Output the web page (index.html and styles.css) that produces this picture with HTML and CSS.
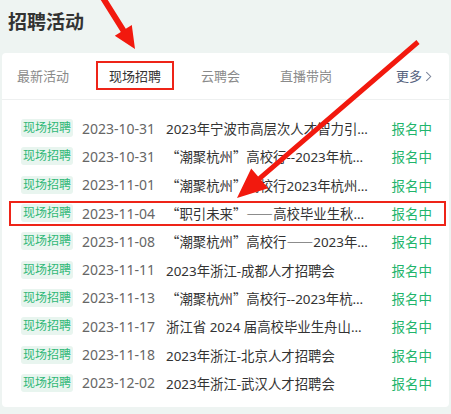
FILE: index.html
```html
<!DOCTYPE html>
<html lang="zh-CN">
<head>
<meta charset="utf-8">
<title>招聘活动</title>
<link rel="stylesheet" href="styles.css">
</head>
<body>
<div class="page">
  <header class="head"><h1 class="head-title">招聘活动</h1></header>
  <section class="card">
    <nav class="tabs">
      <div class="tab-group">
        <span class="tab">最新活动</span>
        <span class="tab tab-active">现场招聘</span>
        <span class="tab">云聘会</span>
        <span class="tab">直播带岗</span>
      </div>
      <span class="more">更多<svg class="more-icon" viewBox="0 0 8 12" width="7" height="11"><path d="M1.5 1 L6.5 6 L1.5 11" fill="none" stroke="#7a8499" stroke-width="1.2"/></svg></span>
    </nav>
    <ul class="list">
      <li class="row"><span class="tag">现场招聘</span><span class="date">2023-10-31</span><span class="title">2023年宁波市高层次人才智力引进活动</span><span class="status">报名中</span></li>
      <li class="row"><span class="tag">现场招聘</span><span class="date">2023-10-31</span><span class="title"><span class="qt">“</span>潮聚杭州<span class="qt">”</span>高校行--2023年杭州市人才招聘会</span><span class="status">报名中</span></li>
      <li class="row"><span class="tag">现场招聘</span><span class="date">2023-11-01</span><span class="title"><span class="qt">“</span>潮聚杭州<span class="qt">”</span>高校行2023年杭州市招聘会</span><span class="status">报名中</span></li>
      <li class="row row-marked"><span class="tag">现场招聘</span><span class="date">2023-11-04</span><span class="title"><span class="qt">“</span>职引未来<span class="qt">”——</span>高校毕业生秋季招聘会</span><span class="status">报名中</span></li>
      <li class="row"><span class="tag">现场招聘</span><span class="date">2023-11-08</span><span class="title"><span class="qt">“</span>潮聚杭州<span class="qt">”</span>高校行<span class="qt">——</span>2023年杭州招聘会</span><span class="status">报名中</span></li>
      <li class="row"><span class="tag">现场招聘</span><span class="date">2023-11-11</span><span class="title">2023年浙江-成都人才招聘会</span><span class="status">报名中</span></li>
      <li class="row"><span class="tag">现场招聘</span><span class="date">2023-11-13</span><span class="title"><span class="qt">“</span>潮聚杭州<span class="qt">”</span>高校行--2023年杭州市人才招聘会</span><span class="status">报名中</span></li>
      <li class="row"><span class="tag">现场招聘</span><span class="date">2023-11-17</span><span class="title">浙江省 2024 届高校毕业生舟山专场招聘会</span><span class="status">报名中</span></li>
      <li class="row"><span class="tag">现场招聘</span><span class="date">2023-11-18</span><span class="title">2023年浙江-北京人才招聘会</span><span class="status">报名中</span></li>
      <li class="row"><span class="tag">现场招聘</span><span class="date">2023-12-02</span><span class="title">2023年浙江-武汉人才招聘会</span><span class="status">报名中</span></li>
    </ul>
  </section>
  <svg class="arrows" viewBox="0 0 451 414" width="451" height="414">
    <polygon fill="#f2190e" points="100.5,-0.4 120.8,32 114.8,35.7 135,49 131.8,25.1 125.8,28.8 105.5,-3.6"/>
    <polygon fill="#f2190e" points="416.4,40.1 258.1,176.5 251.2,168.6 237,198 268.2,188.2 261.3,180.3 419.6,43.9"/>
  </svg>
</div>
</body>
</html>
```
FILE: styles.css
```css
* { box-sizing: border-box; }
html, body { margin: 0; padding: 0; }
body {
  background: #eef4f2;
  font-family: "Noto Sans", "Noto Sans CJK SC", sans-serif;
  color: #333;
}
.page {
  position: relative;
  width: 451px;
  height: 414px;
  overflow: hidden;
}
.head {
  height: 53px;
  padding: 8px 0 0 8px;
}
.head-title {
  margin: 0;
  font-size: 19px;
  line-height: 28px;
  font-weight: 700;
  color: #333;
}
.card {
  margin: 0 2px;
  height: 354px;
  background: #fff;
  border-radius: 4px;
}
.tabs {
  display: flex;
  align-items: center;
  height: 47px;
  padding: 0 17px 0 15px;
  border-bottom: 1px solid #eef0f0;
}
.tab-group {
  display: flex;
  gap: 40px;
}
.tab {
  position: relative;
  font-size: 13px;
  line-height: 20px;
  color: #8a8a8a;
}
.tab-active { color: #333; }
.tab-active::after {
  content: "";
  position: absolute;
  left: -13px;
  right: -13px;
  top: -5px;
  bottom: -4px;
  border: 2px solid #ee2418;
}
.more {
  margin-left: auto;
  display: flex;
  align-items: center;
  gap: 3px;
  font-size: 13px;
  line-height: 20px;
  color: #56627e;
}
.more-icon { display: block; }
.list {
  list-style: none;
  margin: 0;
  padding: 14px 0 0 0;
}
.row {
  position: relative;
  display: flex;
  align-items: center;
  height: 28.3px;
  padding: 0 17px 0 19px;
}
.row-marked::after {
  content: "";
  position: absolute;
  left: 7px;
  right: 3px;
  top: 2px;
  bottom: 1px;
  border: 2px solid #ee2418;
}
.tag {
  flex: none;
  width: 52px;
  height: 18px;
  line-height: 18px;
  text-align: center;
  font-size: 12px;
  color: #30b877;
  background: #e8f5ef;
  border-radius: 3px;
}
.date {
  flex: none;
  width: 93px;
  padding-left: 9px;
  font-size: 14px;
  color: #666;
}
.title {
  flex: none;
  width: 202px;
  font-size: 13.4px;
  color: #333;
  white-space: nowrap;
  overflow: hidden;
  text-overflow: ellipsis;
}
.qt {
  font-family: "Noto Sans CJK SC", sans-serif;
}
.status {
  margin-left: auto;
  font-size: 13.5px;
  white-space: nowrap;
  color: #1fb56c;
}
.arrows {
  position: absolute;
  left: 0;
  top: 0;
  pointer-events: none;
}
```
